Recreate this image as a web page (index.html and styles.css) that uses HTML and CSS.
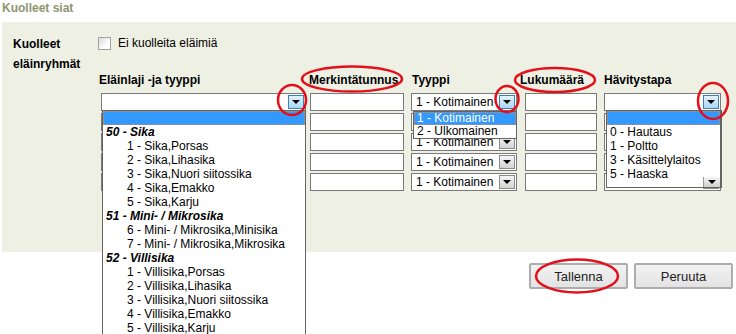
FILE: index.html
```html
<!DOCTYPE html>
<html lang="fi">
<head>
    <meta charset="UTF-8">
    <title>Kuolleet siat</title>
    <link rel="stylesheet" href="styles.css">
</head>
<body>
    <h2 class="section-title">Kuolleet siat</h2>
    <div class="panel">
        <div class="group-label">Kuolleet<br>eläinryhmät</div>
        <div class="group-body">
            <label class="no-dead"><span class="checkbox"></span>Ei kuolleita eläimiä</label>
            <div class="animal-grid">
                <div class="col-head h1">Eläinlaji -ja tyyppi</div>
                <div class="col-head h2">Merkintätunnus</div>
                <div class="col-head h3">Tyyppi</div>
                <div class="col-head h4">Lukumäärä</div>
                <div class="col-head h5">Hävitystapa</div>

                <!-- rivi 1 -->
                <div class="cell">
                    <div class="combo species">
                        <span class="value"></span><span class="arrow active"></span>
                        <div class="dropdown species-list">
                            <div class="opt selected"></div>
                            <div class="opt group">50 - Sika</div>
                            <div class="opt sub">1 - Sika,Porsas</div>
                            <div class="opt sub">2 - Sika,Lihasika</div>
                            <div class="opt sub">3 - Sika,Nuori siitossika</div>
                            <div class="opt sub">4 - Sika,Emakko</div>
                            <div class="opt sub">5 - Sika,Karju</div>
                            <div class="opt group">51 - Mini- / Mikrosika</div>
                            <div class="opt sub">6 - Mini- / Mikrosika,Minisika</div>
                            <div class="opt sub">7 - Mini- / Mikrosika,Mikrosika</div>
                            <div class="opt group">52 - Villisika</div>
                            <div class="opt sub">1 - Villisika,Porsas</div>
                            <div class="opt sub">2 - Villisika,Lihasika</div>
                            <div class="opt sub">3 - Villisika,Nuori siitossika</div>
                            <div class="opt sub">4 - Villisika,Emakko</div>
                            <div class="opt sub">5 - Villisika,Karju</div>
                        </div>
                    </div>
                </div>
                <div class="cell"><div class="field mark"></div></div>
                <div class="cell">
                    <div class="combo type">
                        <span class="value">1 - Kotimainen</span><span class="arrow active"></span>
                        <div class="dropdown type-list">
                            <div class="opt selected">1 - Kotimainen</div>
                            <div class="opt">2 - Ulkomainen</div>
                        </div>
                    </div>
                </div>
                <div class="cell"><div class="field count"></div></div>
                <div class="cell">
                    <div class="combo disposal">
                        <span class="value"></span><span class="arrow active"></span>
                        <div class="dropdown disposal-list">
                            <div class="opt selected"></div>
                            <div class="opt">0 - Hautaus</div>
                            <div class="opt">1 - Poltto</div>
                            <div class="opt">3 - Käsittelylaitos</div>
                            <div class="opt">5 - Haaska</div>
                            <span class="scroll-down"></span>
                        </div>
                    </div>
                </div>

                <!-- rivit 2-5 -->
                <div class="cell"><div class="combo species"><span class="value"></span><span class="arrow"></span></div></div>
                <div class="cell"><div class="field mark"></div></div>
                <div class="cell"><div class="combo type"><span class="value">1 - Kotimainen</span><span class="arrow"></span></div></div>
                <div class="cell"><div class="field count"></div></div>
                <div class="cell"><div class="combo disposal"><span class="value"></span><span class="arrow"></span></div></div>

                <div class="cell"><div class="combo species"><span class="value"></span><span class="arrow"></span></div></div>
                <div class="cell"><div class="field mark"></div></div>
                <div class="cell"><div class="combo type"><span class="value">1 - Kotimainen</span><span class="arrow"></span></div></div>
                <div class="cell"><div class="field count"></div></div>
                <div class="cell"><div class="combo disposal"><span class="value"></span><span class="arrow"></span></div></div>

                <div class="cell"><div class="combo species"><span class="value"></span><span class="arrow"></span></div></div>
                <div class="cell"><div class="field mark"></div></div>
                <div class="cell"><div class="combo type"><span class="value">1 - Kotimainen</span><span class="arrow"></span></div></div>
                <div class="cell"><div class="field count"></div></div>
                <div class="cell"><div class="combo disposal"><span class="value"></span><span class="arrow"></span></div></div>

                <div class="cell"><div class="combo species"><span class="value"></span><span class="arrow"></span></div></div>
                <div class="cell"><div class="field mark"></div></div>
                <div class="cell"><div class="combo type"><span class="value">1 - Kotimainen</span><span class="arrow"></span></div></div>
                <div class="cell"><div class="field count"></div></div>
                <div class="cell"><div class="combo disposal"><span class="value"></span><span class="arrow"></span></div></div>
            </div>
        </div>
    </div>
    <div class="actions">
        <button class="btn">Tallenna</button>
        <button class="btn">Peruuta</button>
    </div>

    <!-- merkinnät -->
    <svg class="marks" width="736" height="334" viewBox="0 0 736 334">
        <g fill="none" stroke="#e3101c" stroke-width="2.5">
            <ellipse cx="292" cy="100" rx="14" ry="15"/>
            <ellipse cx="352" cy="79" rx="50" ry="12.5"/>
            <ellipse cx="507" cy="99" rx="11.5" ry="13"/>
            <ellipse cx="555" cy="80" rx="40" ry="12"/>
            <ellipse cx="713" cy="101" rx="15" ry="18"/>
            <ellipse cx="577" cy="276" rx="41" ry="16.5"/>
        </g>
    </svg>
</body>
</html>
```

FILE: styles.css
```css
html, body {
    margin: 0;
    height: 334px;
    overflow: hidden;
}

body {
    position: relative;
    font-family: "Liberation Sans", Arial, sans-serif;
    font-size: 12px;
    color: #000;
    background-color: #fff;
}

.section-title {
    margin: 1px 0 0 2px;
    font-size: 12px;
    line-height: 14px;
    font-weight: bold;
    color: #8c9671;
}

.panel {
    display: flex;
    margin: 7px 0 0 2px;
    padding: 12px 0 59px 11px;
    background-color: #eff0e4;
}

.group-label {
    width: 85px;
    font-weight: bold;
    line-height: 20px;
}

.group-body {
    flex: 1;
}

.no-dead {
    display: flex;
    align-items: center;
    height: 16px;
    margin-top: 1px;
    line-height: 16px;
}

.checkbox {
    width: 13px;
    height: 13px;
    box-sizing: border-box;
    margin-right: 7px;
    border: 1px solid #a3a3a3;
    background: linear-gradient(135deg, #dcdcdc, #ffffff 70%);
}

.animal-grid {
    display: grid;
    grid-template-columns: 211px 102px 109px 84px 1fr;
    grid-auto-rows: 20px;
    margin-top: 22px;
}

.col-head {
    height: 21px;
    font-weight: bold;
    line-height: 14px;
}

.h1 { padding-left: 1px; }
.h3 { padding-left: 1px; }

.cell {
    position: relative;
}

.combo, .field {
    position: relative;
    box-sizing: border-box;
    height: 18px;
    border: 1px solid #7a7a7a;
    background-color: #fff;
}

.combo {
    display: flex;
    align-items: center;
}

.combo .value {
    flex: 1;
    padding-left: 4px;
    line-height: 16px;
    white-space: nowrap;
}

.arrow {
    position: relative;
    width: 16px;
    height: 14px;
    box-sizing: border-box;
    margin-right: 1px;
    border: 1px solid #8a8a8a;
    background: linear-gradient(#f6f6f6, #d2d2d2);
}

.arrow::after {
    content: "";
    position: absolute;
    left: 3px;
    top: 4px;
    border-left: 4px solid transparent;
    border-right: 4px solid transparent;
    border-top: 4px solid #000;
}

.arrow.active {
    border-color: #3c7fb1;
    background: linear-gradient(#e5f3fd, #a9d6f5);
}

.species { margin-left: 3px; width: 205px; }
.mark { margin-left: 1px; width: 94px; }
.type { width: 106px; }
.count { margin-left: 5px; width: 72px; }
.disposal { width: 117px; }

.dropdown {
    position: absolute;
    top: 16px;
    left: 0;
    z-index: 5;
    box-sizing: border-box;
    border: 1px solid #646464;
    background-color: #fff;
}

.opt {
    height: 14px;
    padding-left: 3px;
    line-height: 14px;
    white-space: nowrap;
}

.opt.selected {
    box-sizing: border-box;
    border: 1px dotted #d88a45;
    background-color: #3399ff;
    color: #fff;
    line-height: 12px;
    padding-left: 2px;
}

.opt.group {
    font-weight: bold;
    font-style: italic;
}

.opt.sub {
    padding-left: 24px;
}

.species-list {
    width: 204px;
    height: 230px;
}

.type-list {
    top: 17px;
    left: 1px;
    width: 104px;
}

.type-list .opt {
    height: 13px;
    line-height: 13px;
}

.type-list .opt.selected {
    line-height: 11px;
}

.disposal-list {
    left: 1px;
    width: 116px;
    height: 78px;
    border-right: 2px solid #646464;
}

.scroll-down {
    position: absolute;
    right: 0;
    bottom: 0;
    width: 16px;
    height: 10px;
    background: linear-gradient(#f4f4f4, #cfcfcf);
    border-left: 1px solid #9a9a9a;
}

.scroll-down::after {
    content: "";
    position: absolute;
    left: 4px;
    top: 3px;
    border-left: 4px solid transparent;
    border-right: 4px solid transparent;
    border-top: 4px solid #000;
}

.actions {
    display: flex;
    justify-content: flex-end;
    gap: 6px;
    margin: 11px 3px 0 0;
}

.btn {
    width: 99px;
    height: 26px;
    border: 2px solid #adadad;
    border-radius: 2px;
    background: linear-gradient(#f2f2f2, #e3e3e3);
    font-family: "Liberation Sans", Arial, sans-serif;
    font-size: 13px;
    color: #222;
}

.marks {
    position: absolute;
    top: 0;
    left: 0;
    z-index: 10;
    pointer-events: none;
}
```
